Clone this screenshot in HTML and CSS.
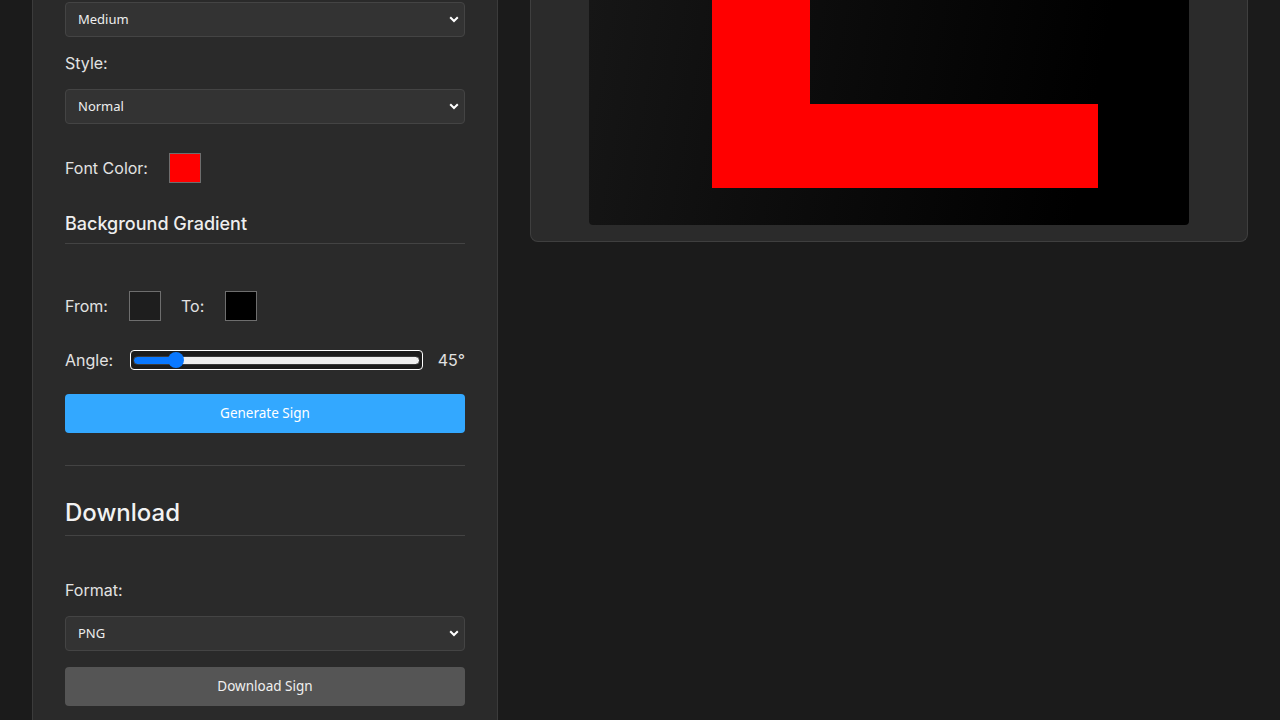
FILE: index.html
```html
<!DOCTYPE html>
<html lang="en">
<head>
<meta charset="utf-8">
<title>Sign Generator</title>
<link rel="stylesheet" href="styles.css">
</head>
<body>
<div class="layout">
  <aside class="sidebar">
    <select class="select"><option>Medium</option></select>
    <label class="label">Style:</label>
    <select class="select"><option>Normal</option></select>
    <div class="row color-row">
      <span class="row-label">Font Color:</span>
      <span class="swatch red"></span>
    </div>
    <h3 class="subhead">Background Gradient</h3>
    <div class="row from-row">
      <span class="row-label">From:</span>
      <span class="swatch dark"></span>
      <span class="row-label to">To:</span>
      <span class="swatch black"></span>
    </div>
    <div class="row angle-row">
      <span class="row-label">Angle:</span>
      <input class="range" type="range" min="0" max="360" value="45">
      <span class="deg">45°</span>
    </div>
    <button class="btn primary">Generate Sign</button>
    <hr class="divider">
    <h2 class="section-title">Download</h2>
    <label class="label format">Format:</label>
    <select class="select"><option>PNG</option></select>
    <button class="btn secondary">Download Sign</button>
  </aside>
  <main class="preview">
    <div class="panel">
      <div class="canvas">
        <div class="l-vert"></div>
        <div class="l-horiz"></div>
      </div>
    </div>
  </main>
</div>
</body>
</html>
```
FILE: styles.css
```css
* { box-sizing: border-box; }
html, body { margin: 0; height: 100%; }
body {
  background: #1b1b1b;
  font-family: Inter, "Noto Sans", sans-serif;
  color: #e2e2e2;
  overflow: hidden;
}
.layout {
  display: flex;
  gap: 32px;
  padding: 0 32px;
  align-items: flex-start;
}
.sidebar {
  width: 466px;
  flex: none;
  background: #2a2a2a;
  border: 1px solid #3b3b3b;
  border-top: none;
  padding: 2px 32px 40px;
  display: flex;
  flex-direction: column;
  min-height: 760px;
}
.select {
  appearance: none;
  -webkit-appearance: none;
  width: 400px;
  height: 35px;
  background: #333 url("data:image/svg+xml;utf8,<svg xmlns='http://www.w3.org/2000/svg' width='10' height='7' viewBox='0 0 10 7'><path d='M1.2 1.2 5 5 8.8 1.2' fill='none' stroke='white' stroke-width='2'/></svg>") no-repeat right 5px center;
  border: 1px solid #444;
  border-radius: 4px;
  color: #eee;
  font-family: "Noto Sans", sans-serif;
  font-size: 13px;
  line-height: 33px;
  padding: 0 12px 1px;
  margin: 0;
}
.label {
  font-size: 16px;
  line-height: 20px;
  margin: 16px 0 16px;
  color: #e2e2e2;
}
.label.format { margin: 44px 0 16px; }
.row {
  display: flex;
  align-items: center;
  font-size: 16px;
}
.color-row { margin-top: 29px; height: 30px; }
.row-label { margin-right: 21px; }
.swatch {
  width: 32px;
  height: 30px;
  border: 1px solid #6e6e6e;
  display: inline-block;
}
.swatch.red { background: #ff0000; }
.swatch.dark { background: #1e1e1e; }
.swatch.black { background: #000; }
.row-label.to { margin-left: 20px; }
.subhead {
  font-size: 18px;
  font-weight: 500;
  margin: 30px 0 0;
  line-height: 22px;
  padding-bottom: 8px;
  border-bottom: 1px solid #434343;
  color: #eee;
}
.from-row { margin-top: 47px; height: 30px; }
.angle-row { margin-top: 29px; height: 20px; justify-content: space-between; }
.angle-row .row-label { margin-right: 0; }
.range {
  -webkit-appearance: none;
  appearance: none;
  width: 291px;
  height: 18px;
  margin: 0 0 0 2px;
  background: #1c1c1c;
  border-radius: 3px;
  outline: 1px solid #fff;
  padding: 0 2px;
}
.range::-webkit-slider-runnable-track {
  height: 9px;
  border-radius: 5px;
  background: linear-gradient(to right, #0a78ff 0 15%, #efefef 15%);
  border: 1px solid #3a3a3a;
}
.range::-webkit-slider-thumb {
  -webkit-appearance: none;
  width: 16px;
  height: 16px;
  border-radius: 50%;
  background: #0a78ff;
  margin-top: -4.5px;
  border: none;
}
.deg { font-size: 16px; }
.btn {
  width: 400px;
  height: 39px;
  border: none;
  border-radius: 4px;
  font-family: "Noto Sans", sans-serif;
  font-size: 13.5px;
  color: #fff;
  padding: 0 0 1px;
}
.btn.primary { background: #33a8ff; margin-top: 24px; }
.btn.secondary { background: #555; color: #f0f0f0; margin-top: 16px; }
.divider {
  border: none;
  border-top: 1px solid #434343;
  margin: 32px 0 0;
  width: 400px;
}
.section-title {
  font-size: 24px;
  font-weight: 500;
  line-height: 30px;
  margin: 32px 0 0;
  padding-bottom: 7px;
  border-bottom: 1px solid #434343;
  color: #f2f2f2;
}
.preview { flex: 1; }
.panel {
  background: #2b2b2b;
  border: 1px solid #3f3f3f;
  border-top: none;
  border-radius: 0 0 8px 8px;
  padding: 0 0 16px;
  display: flex;
  justify-content: center;
}
.canvas {
  position: relative;
  width: 600px;
  height: 225px;
  border-radius: 0 0 4px 4px;
  background: linear-gradient(100deg, #161616 0%, #0b0b0b 40%, #000 82%);
  overflow: hidden;
}
.l-vert {
  position: absolute;
  left: 123px;
  top: 0;
  width: 98px;
  height: 188px;
  background: #ff0000;
}
.l-horiz {
  position: absolute;
  left: 123px;
  top: 104px;
  width: 386px;
  height: 84px;
  background: #ff0000;
}
```
